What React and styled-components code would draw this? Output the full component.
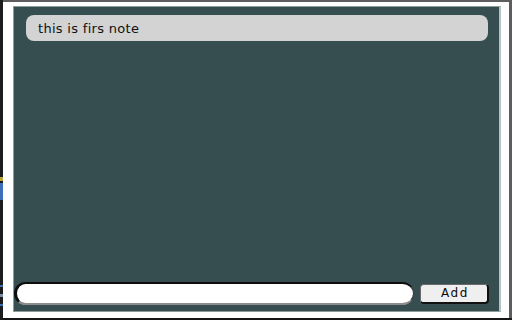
import React from "react";
import styled, { createGlobalStyle } from "styled-components";

const Global = createGlobalStyle`
  html, body { margin: 0; padding: 0; }
  body { width: 512px; height: 320px; overflow: hidden; background: #151515; }
  * { box-sizing: border-box; }
`;

const Page = styled.div`
  display: flex;
  width: 512px;
  height: 320px;
  background: #151515;
`;

const LeftStrip = styled.div`
  width: 3px;
  display: flex;
  flex-direction: column;
  background: #1c1c1f;
`;

const Segment = styled.div`
  height: ${(p) => p.$h}px;
  flex-shrink: 0;
  background: ${(p) => p.$c || "transparent"};
`;

const RightStrip = styled.div`
  width: 3px;
  background: #5d5d5d;
  border-bottom: 2px solid #1a1a1a;
`;

const Frame = styled.div`
  flex: 1;
  display: flex;
  flex-direction: column;
  background: #ffffff;
  border-top: 2px solid #5e5e5e;
  border-bottom: 2px solid #161616;
  padding: 4px 8px 6px 10px;
`;

const Panel = styled.div`
  flex: 1;
  display: flex;
  flex-direction: column;
  background: #374e50;
  border: 1px solid #8e9c9c;
  border-right: 2px solid #b9c2c2;
`;

const Notes = styled.div`
  flex: 1;
  display: flex;
  flex-direction: column;
  gap: 8px;
  padding: 8px 11px 0 12px;
`;

const Note = styled.div`
  height: 26px;
  display: flex;
  align-items: center;
  padding-left: 12px;
  background: #d3d3d3;
  border-radius: 8px;
  font-family: "DejaVu Sans", "Liberation Sans", sans-serif;
  font-size: 13px;
  letter-spacing: 0.3px;
  color: #111111;
`;

const InputRow = styled.div`
  display: flex;
  align-items: center;
  padding: 0 9px 6px 0;
`;

const Input = styled.input`
  width: 400px;
  height: 23px;
  background: #ffffff;
  border-radius: 12px;
  border-style: solid;
  border-width: 2px 1px 2px 3px;
  border-color: #0d0d0d #3a3a3a #8c8c8c #0d0d0d;
  outline: none;
  padding: 0 10px;
  font-family: "DejaVu Sans", sans-serif;
  font-size: 13px;
`;

const AddButton = styled.button`
  margin-left: 6px;
  width: 69px;
  height: 20px;
  padding: 0 0 0 2px;
  background: #efefef;
  border-radius: 4px;
  border-style: solid;
  border-width: 1px 2px 2px 1px;
  border-color: #6a6a6a #111111 #111111 #6a6a6a;
  font-family: "DejaVu Sans", "Liberation Sans", sans-serif;
  font-size: 12px;
  letter-spacing: 1.6px;
  color: #0a0a0a;
  display: flex;
  align-items: center;
  justify-content: center;
`;

export default function App() {
  const notes = ["this is firs note"];
  return (
    <>
      <Global />
      <Page>
        <LeftStrip>
          <Segment $h={177} />
          <Segment $h={4} $c="#b8a23a" />
          <Segment $h={2} />
          <Segment $h={17} $c="#3d6fb8" />
          <Segment $h={85} />
          <Segment $h={2} $c="#3d6fb8" />
          <Segment $h={7} />
          <Segment $h={3} $c="#7d8fa8" />
          <Segment $h={7} />
          <Segment $h={2} $c="#3d6fb8" />
        </LeftStrip>
        <Frame>
          <Panel>
            <Notes>
              {notes.map((n, i) => (
                <Note key={i}>{n}</Note>
              ))}
            </Notes>
            <InputRow>
              <Input type="text" />
              <AddButton>Add</AddButton>
            </InputRow>
          </Panel>
        </Frame>
        <RightStrip />
      </Page>
    </>
  );
}
